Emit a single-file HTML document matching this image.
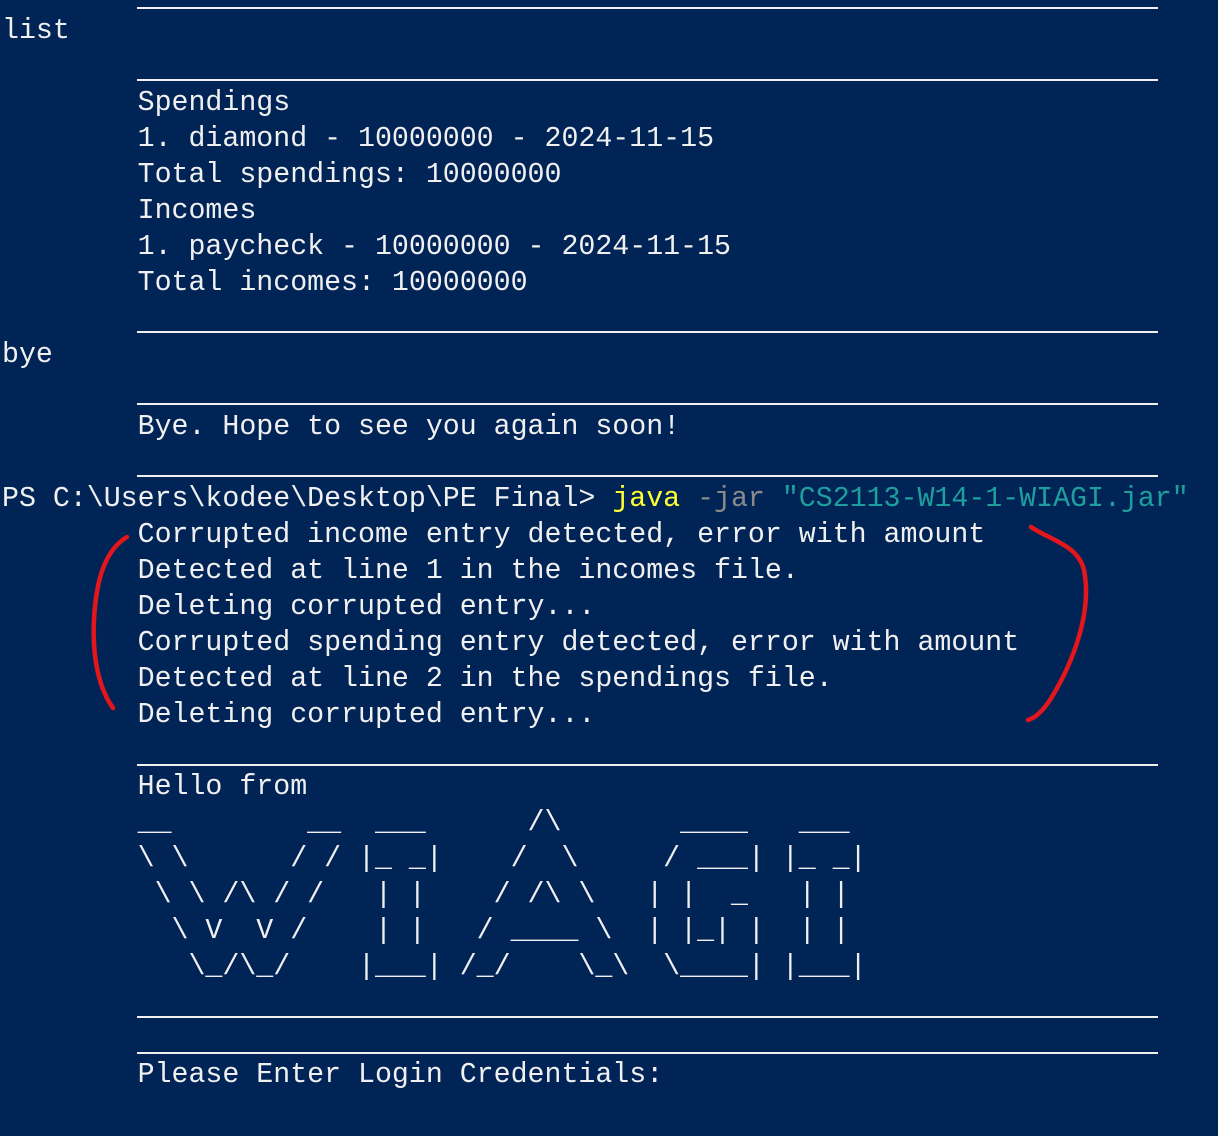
<!DOCTYPE html>
<html><head><meta charset="utf-8"><style>
html,body{margin:0;padding:0;}
body{width:1218px;height:1136px;background:#012456;position:relative;overflow:hidden;}
pre{position:absolute;left:2px;top:13px;margin:0;font-family:"Liberation Mono",monospace;font-size:28.25px;line-height:36px;color:#f0f0f0;white-space:pre;}
.sep{position:absolute;left:137px;width:1021px;height:2px;background:#f0f0f0;}
.y{color:#ffff33}.g{color:#8a8a8a}.t{color:#1f9e9e}
</style></head><body>
<div class="sep" style="top:7px"></div>
<div class="sep" style="top:79px"></div>
<div class="sep" style="top:331px"></div>
<div class="sep" style="top:403px"></div>
<div class="sep" style="top:475px"></div>
<div class="sep" style="top:764px"></div>
<div class="sep" style="top:1016px"></div>
<div class="sep" style="top:1052px"></div>
<pre>list

        Spendings
        1. diamond - 10000000 - 2024-11-15
        Total spendings: 10000000
        Incomes
        1. paycheck - 10000000 - 2024-11-15
        Total incomes: 10000000

bye

        Bye. Hope to see you again soon!

PS C:\Users\kodee\Desktop\PE Final&gt; <span class="y">java</span> <span class="g">-jar</span> <span class="t">"CS2113-W14-1-WIAGI.jar"</span>
        Corrupted income entry detected, error with amount
        Detected at line 1 in the incomes file.
        Deleting corrupted entry...
        Corrupted spending entry detected, error with amount
        Detected at line 2 in the spendings file.
        Deleting corrupted entry...

        Hello from
        __        __  ___      /\       ____   ___
        \ \      / / |_ _|    /  \     / ___| |_ _|
         \ \ /\ / /   | |    / /\ \   | |  _   | |
          \ V  V /    | |   / ____ \  | |_| |  | |
           \_/\_/    |___| /_/    \_\  \____| |___|


        Please Enter Login Credentials:</pre>
<svg width="1218" height="1136" style="position:absolute;left:0;top:0" fill="none" stroke="#e3161c" stroke-width="4.5" stroke-linecap="round">
<path d="M127 537 C105 550 96 580 94 620 C92 660 100 690 113 708"/>
<path d="M1031 527 C1050 540 1078 545 1084 570 C1092 610 1075 660 1050 700 C1042 712 1035 718 1028 720"/>
</svg>
</body></html>
